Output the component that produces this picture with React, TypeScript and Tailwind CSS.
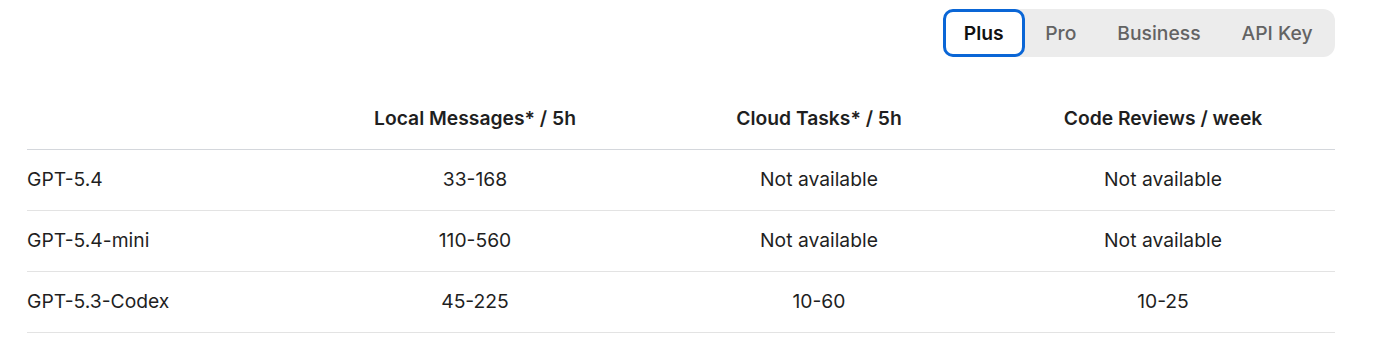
const tabs = ["Plus", "Pro", "Business", "API Key"];

const rows = [
  { model: "GPT-5.4", local: "33-168", cloud: "Not available", reviews: "Not available" },
  { model: "GPT-5.4-mini", local: "110-560", cloud: "Not available", reviews: "Not available" },
  { model: "GPT-5.3-Codex", local: "45-225", cloud: "10-60", reviews: "10-25" },
];

export default function App() {
  return (
    <div className="w-[1392px] h-[342px] bg-white font-['Inter',sans-serif] text-[#1f1f1f]">
      <div className="flex justify-end pr-[57px] pt-[9px]">
        <div className="flex items-center rounded-[12px] bg-[#ececec] pr-[2px]">
          {tabs.map((t, i) =>
            i === 0 ? (
              <button
                key={t}
                className="h-[48px] w-[82px] rounded-[10px] border-[3px] border-[#0a66d6] bg-white text-[19.3px] font-semibold text-[#111]"
              >
                {t}
              </button>
            ) : (
              <button key={t} className="h-[48px] px-[20.5px] text-[19.3px] font-medium text-[#636363]">
                {t}
              </button>
            )
          )}
        </div>
      </div>

      <table className="ml-[27px] mt-[34px] w-[1308px] table-fixed border-collapse text-[19.3px]">
        <colgroup>
          <col className="w-[276px]" />
          <col className="w-[344px]" />
          <col className="w-[344px]" />
          <col className="w-[344px]" />
        </colgroup>
        <thead>
          <tr className="h-[58px] border-b border-[#d4d7dc]">
            <th />
            <th className="pb-[2px] text-center font-semibold">Local Messages* / 5h</th>
            <th className="pb-[2px] text-center font-semibold">Cloud Tasks* / 5h</th>
            <th className="pb-[2px] text-center font-semibold">Code Reviews / week</th>
          </tr>
        </thead>
        <tbody>
          {rows.map((r) => (
            <tr key={r.model} className="h-[61px] border-b border-[#e3e3e3]">
              <td className="text-left">{r.model}</td>
              <td className="text-center">{r.local}</td>
              <td className="text-center">{r.cloud}</td>
              <td className="text-center">{r.reviews}</td>
            </tr>
          ))}
        </tbody>
      </table>
    </div>
  );
}
